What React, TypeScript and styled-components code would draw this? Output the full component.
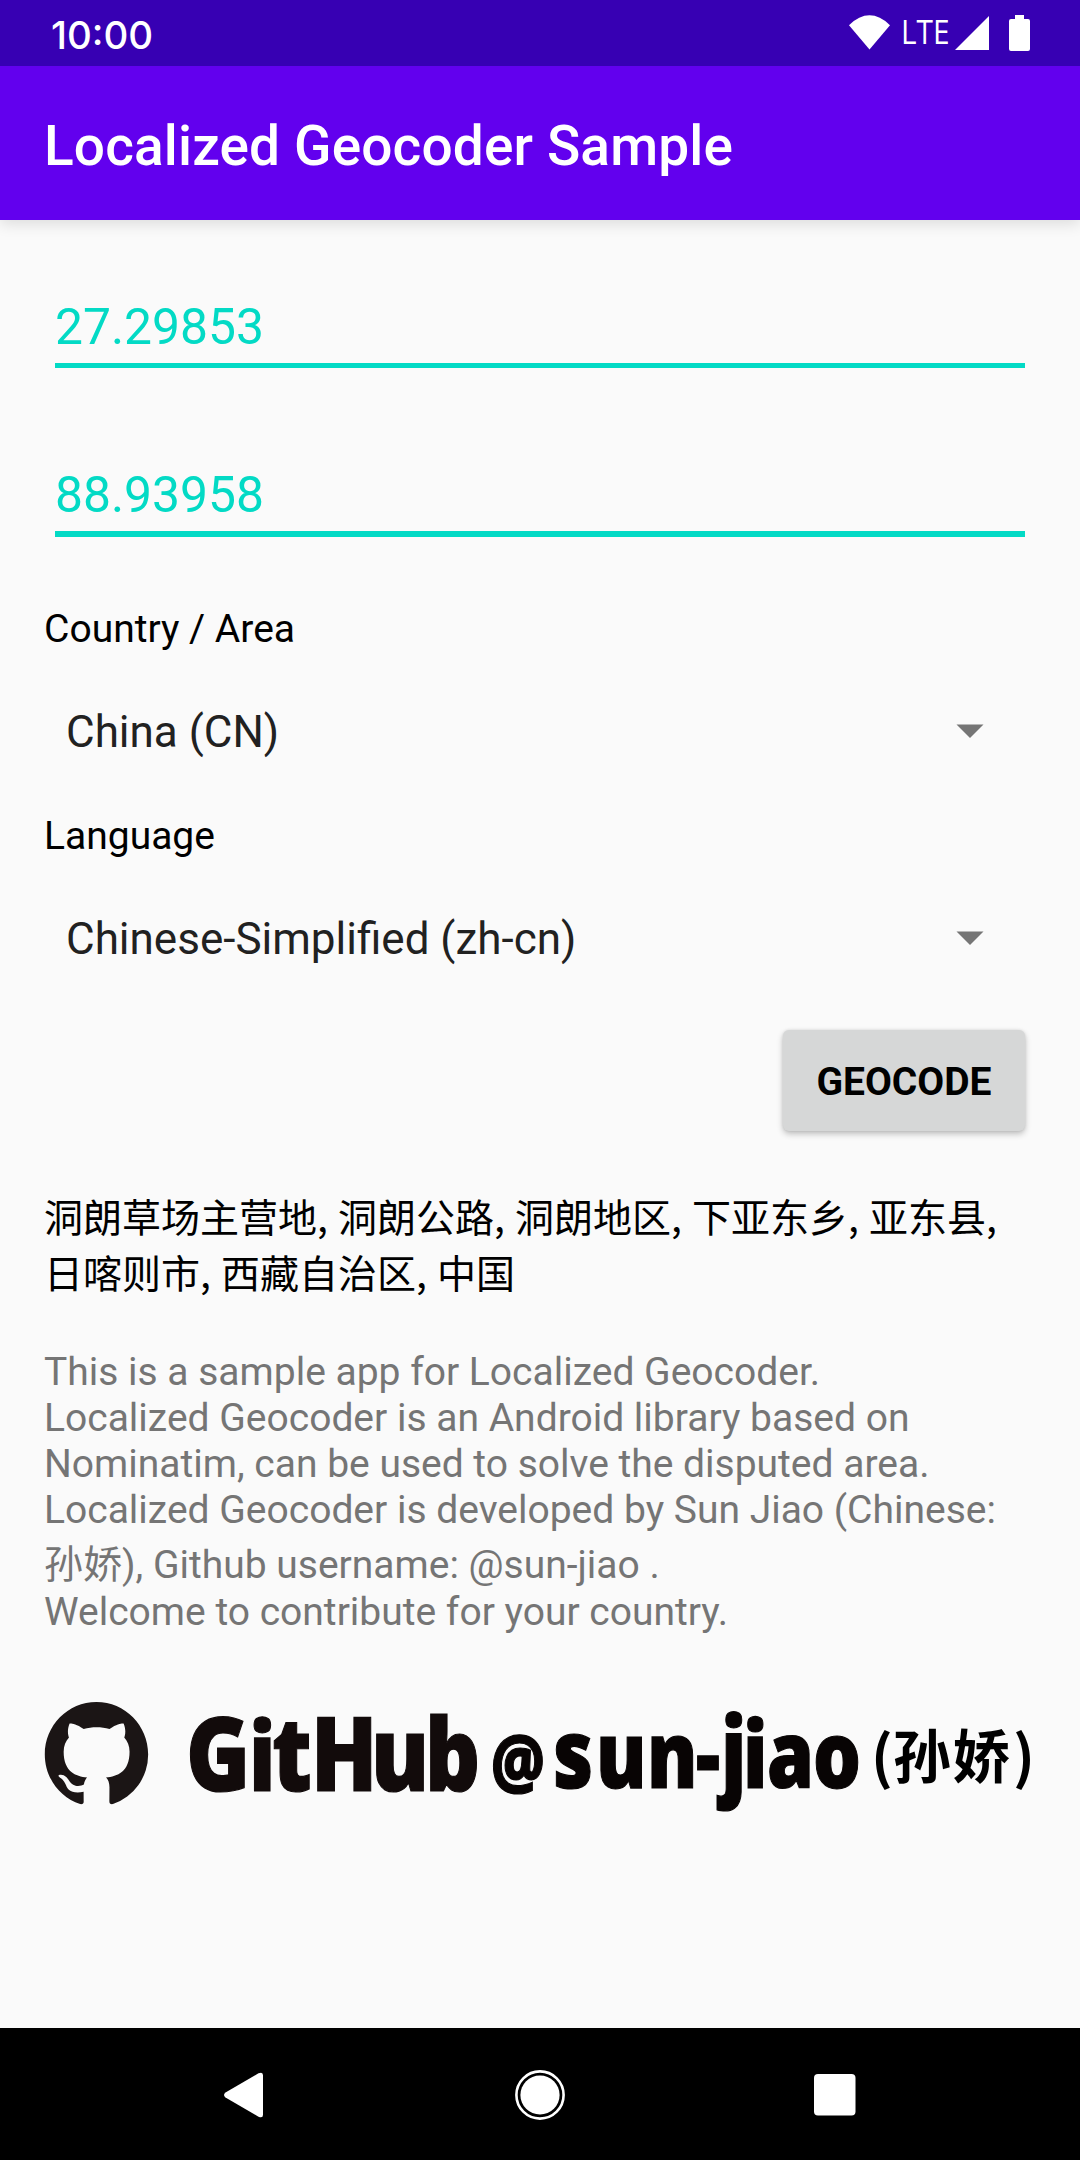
import React from 'react';
import styled, { createGlobalStyle } from 'styled-components';

const GlobalStyle = createGlobalStyle`
  * { box-sizing: border-box; }
  html, body { margin: 0; padding: 0; background: #fafafa; }
`;

const Screen = styled.div`
  width: 1080px;
  height: 2160px;
  display: flex;
  flex-direction: column;
  overflow: hidden;
  background: #fafafa;
  font-family: Roboto, 'Noto Sans CJK SC', sans-serif;
`;

const StatusBar = styled.header`
  position: relative;
  z-index: 1;
  flex: none;
  height: 66px;
  padding: 0 49px 0 51px;
  display: flex;
  justify-content: space-between;
  align-items: flex-start;
  background: #3700b3;
  color: #fff;
`;

const Clock = styled.time`
  font: 500 38.5px/70px Inter, sans-serif;
`;

const StatusIcons = styled.svg`
  width: 184px;
  height: 66px;
`;

const AppBar = styled.div`
  flex: none;
  height: 154px;
  padding: 6px 44px 0;
  display: flex;
  align-items: center;
  background: #6200ee;
  box-shadow: 0 4px 14px rgba(0, 0, 0, 0.12);
`;

const Title = styled.h1`
  margin: 0;
  font-size: 55px;
  font-weight: 500;
  line-height: 64px;
  letter-spacing: 0.14px;
  color: #fff;
`;

const Content = styled.main`
  flex: 1;
  min-height: 0;
  padding: 78px 44px 0;
  display: flex;
  flex-direction: column;
`;

const Field = styled.div<{ $line: number }>`
  margin: 0 11px;
  padding-bottom: 7px;
  border-bottom: ${(p) => p.$line}px solid #03dac5;
  font-size: 49.8px;
  line-height: 58px;
  color: #03dac5;
  & + & { margin-top: 98px; }
`;

const FormRows = styled.section`
  margin-top: 69px;
`;

const Label = styled.div`
  font-size: 39px;
  line-height: 46px;
  color: #000;
`;

const Spinner = styled.div`
  height: 161px;
  padding: 0 52px 2px 22px;
  display: flex;
  align-items: center;
  justify-content: space-between;
  font-size: 44px;
  line-height: 52px;
  color: #212121;
`;

const Caret = styled.svg`
  width: 28px;
  height: 14px;
  margin-top: -1px;
`;

const GeocodeButton = styled.button`
  align-self: flex-end;
  width: 242px;
  height: 101px;
  margin: 10px 11px 0 0;
  padding: 3px 0 0;
  border: 0;
  border-radius: 6px;
  background: #d6d7d7;
  box-shadow: 0 3px 6px rgba(0, 0, 0, 0.24), 0 0 3px rgba(0, 0, 0, 0.1);
  font: 700 39px/46px Roboto, sans-serif;
  color: #000;
`;

const Result = styled.p`
  margin: 56px 0 0;
  font-family: 'Noto Sans CJK SC', sans-serif;
  font-size: 39px;
  line-height: 56px;
  word-spacing: 1.4px;
  color: #000;
`;

const About = styled.p`
  margin: 50px 0 0;
  font-size: 39px;
  color: #757575;
`;

const Line = styled.span<{ $tall?: boolean }>`
  display: block;
  white-space: nowrap;
  line-height: ${(p) => (p.$tall ? 48 : 46)}px;
  padding-top: ${(p) => (p.$tall ? 8 : 0)}px;
`;

const Brand = styled.svg`
  flex: none;
  width: 992px;
  height: 124px;
  margin-top: 65px;
  overflow: visible;
`;

const NavBar = styled.nav`
  flex: none;
  height: 132px;
  background: #000;
  display: flex;
  justify-content: space-between;
  align-items: center;
  padding: 1px 215px 0;
`;

const NavIcon = styled.svg`
  width: 60px;
  height: 60px;
  fill: #fff;
`;

const Arrow = () => (
  <Caret viewBox="0 0 28 14" fill="#757575">
    <path d="M0.5 0.5h27L14 14z" />
  </Caret>
);

const aboutLines = [
  'This is a sample app for Localized Geocoder.',
  'Localized Geocoder is an Android library based on',
  'Nominatim, can be used to solve the disputed area.',
  'Localized Geocoder is developed by Sun Jiao (Chinese:',
  '孙娇), Github username: @sun-jiao .',
  'Welcome to contribute for your country.',
];

/* One run of the wordmark: each letter has its own pen position and, where needed, size and weight. */
type Letter = [char: string, x: number, size?: number, weight?: number];

const Word = ({ letters, y, size, fill, scale = 1, bold = 0, family = 'Open Sans', weight = 800 }: {
  letters: Letter[]; y: number; size: number; fill: string; scale?: number; bold?: number; family?: string; weight?: number;
}) => (
  <text
    transform={`translate(0 ${y}) scale(${scale} 1)`}
    fontFamily={`'${family}', sans-serif`}
    fontWeight={weight}
    fontSize={size}
    fill={fill}
    stroke={fill}
    strokeWidth={bold}
  >
    {letters.map(([char, x, ownSize, ownWeight]) => (
      <tspan key={x} x={x / scale} fontSize={ownSize} fontWeight={ownWeight}>{char}</tspan>
    ))}
  </text>
);

export default function App() {
  return (
    <Screen>
      <GlobalStyle />
      <StatusBar>
        <Clock>10:00</Clock>
        <StatusIcons viewBox="847 0 184 66" fill="#fff">
          <path d="M849 25.2Q869.5 5.5 890 25.2L869.5 49.5z" />
          <text x="901" y="44.4" fontFamily="'Open Sans', sans-serif" fontSize="33.5" textLength="48.5" lengthAdjust="spacingAndGlyphs">LTE</text>
          <path d="M989 16v34h-34z" />
          <path d="M1015 15h9v4h4q2 0 2 2v28q0 2-2 2h-17q-2 0-2-2v-28q0-2 2-2h4z" />
        </StatusIcons>
      </StatusBar>
      <AppBar>
        <Title>Localized Geocoder Sample</Title>
      </AppBar>
      <Content>
        <Field $line={5}>27.29853</Field>
        <Field $line={6}>88.93958</Field>
        <FormRows>
          <Label>Country / Area</Label>
          <Spinner>China (CN)<Arrow /></Spinner>
          <Label>Language</Label>
          <Spinner>Chinese-Simplified (zh-cn)<Arrow /></Spinner>
        </FormRows>
        <GeocodeButton>GEOCODE</GeocodeButton>
        <Result>洞朗草场主营地, 洞朗公路, 洞朗地区, 下亚东乡, 亚东县, 日喀则市, 西藏自治区, 中国</Result>
        <About>
          {aboutLines.map((line, i) => (
            <Line key={line} $tall={i === 4}>{line}</Line>
          ))}
        </About>
        <Brand viewBox="44 1700 992 124">
          <path
            transform="translate(44.8 1702) scale(6.46 6.55)"
            fill="#1b1515"
            d="M8 0C3.58 0 0 3.58 0 8c0 3.54 2.29 6.53 5.47 7.59.4.07.55-.17.55-.38 0-.19-.01-.82-.01-1.49-2.01.37-2.53-.49-2.69-.94-.09-.23-.48-.94-.82-1.13-.28-.15-.68-.52-.01-.53.63-.01 1.08.58 1.23.82.72 1.21 1.87.87 2.33.66.07-.52.28-.87.51-1.07-1.78-.2-3.64-.89-3.64-3.95 0-.87.31-1.59.82-2.15-.08-.2-.36-1.02.08-2.12 0 0 .67-.21 2.2.82.64-.18 1.32-.27 2-.27s1.36.09 2 .27c1.53-1.04 2.2-.82 2.2-.82.44 1.1.16 1.92.08 2.12.51.56.82 1.27.82 2.15 0 3.07-1.87 3.75-3.65 3.95.29.25.54.73.54 1.48 0 1.07-.01 1.93-.01 2.2 0 .21.15.46.55.38A8.01 8.01 0 0 0 16 8c0-4.42-3.58-8-8-8z"
          />
          <Word y={1790.5} size={102} scale={0.85} bold={1.2} fill="#120b0b" letters={[['G', 186], ['i', 249, 96], ['t', 272], ['H', 311], ['u', 371], ['b', 425, 101]]} />
          <Word y={1787.5} size={93} scale={0.81} bold={1.2} fill="#080404" letters={[['@', 491, 74, 800], ['s', 553, 96], ['u', 596], ['n', 647], ['-', 696], ['j', 721, 97], ['i', 743], ['a', 767], ['o', 813]]} />
          <Word y={1778} size={58} fill="#000" family="Noto Sans CJK SC" weight={700} letters={[['(', 871], ['孙', 893], ['娇', 952], [')', 1013]]} />
        </Brand>
      </Content>
      <NavBar>
        <NavIcon viewBox="0 0 60 60"><path d="M10.5 27.5L43.5 8.3q4.5-2 4.5 2v39.4q0 4-4.5 2L10.5 32.5q-3-2.5 0-5z" /></NavIcon>
        <NavIcon viewBox="0 0 60 60">
          <circle cx="30" cy="30" r="23.6" fill="none" stroke="#fff" strokeWidth="2.6" />
          <circle cx="30" cy="30" r="19.6" />
        </NavIcon>
        <NavIcon viewBox="0 0 60 60"><rect x="9" y="9" width="41.5" height="41.5" rx="4" /></NavIcon>
      </NavBar>
    </Screen>
  );
}
